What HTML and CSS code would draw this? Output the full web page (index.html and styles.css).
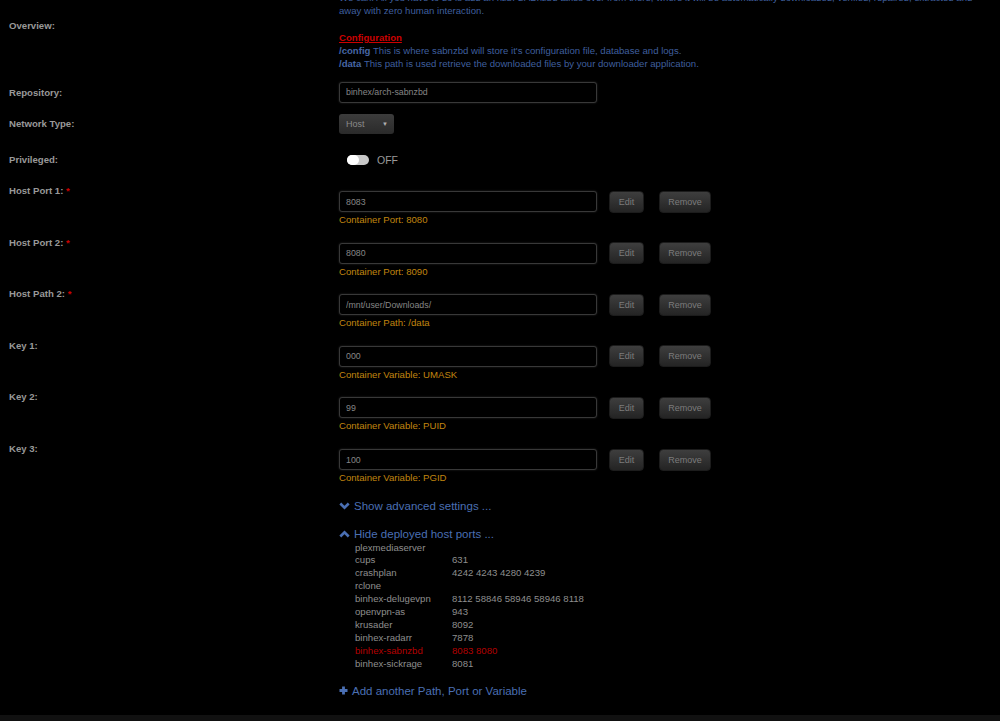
FILE: index.html
```html
<!DOCTYPE html>
<html lang="en">
<head>
    <meta charset="UTF-8" />
    <title>Add Container</title>
    <link rel="stylesheet" href="styles.css">
</head>
<body>
    <div class="page">
        <div class="row row-overview">
            <div class="label">Overview:</div>
            <div class="desc">
                <span class="desc-first">We can. All you have to do is add an nzb. SABnzbd takes over from there, where it will be automatically downloaded, verified, repaired, extracted and</span>
                <span class="desc-line">away with zero human interaction.</span>
                <span class="desc-title">Configuration</span>
                <span class="desc-line"><b>/config</b> This is where sabnzbd will store it's configuration file, database and logs.</span>
                <span class="desc-line"><b>/data</b> This path is used retrieve the downloaded files by your downloader application.</span>
            </div>
        </div>

        <div class="row row-center row-repo">
            <div class="label">Repository:</div>
            <div class="field"><input class="text-input" type="text" value="binhex/arch-sabnzbd" /></div>
        </div>

        <div class="row row-center row-net">
            <div class="label">Network Type:</div>
            <div class="field">
                <div class="select"><span>Host</span><span class="caret">&#9660;</span></div>
            </div>
        </div>

        <div class="row row-center row-priv">
            <div class="label">Privileged:</div>
            <div class="field toggle-field">
                <span class="toggle"><span class="knob"></span></span>
                <span class="toggle-text">OFF</span>
            </div>
        </div>

        <div class="row row-item">
            <div class="label">Host Port 1: <span class="req">*</span></div>
            <div class="field">
                <div class="controls">
                    <input class="text-input" type="text" value="8083" />
                    <button class="btn btn-edit">Edit</button>
                    <button class="btn btn-remove">Remove</button>
                </div>
                <div class="hint">Container Port: 8080</div>
            </div>
        </div>

        <div class="row row-item">
            <div class="label">Host Port 2: <span class="req">*</span></div>
            <div class="field">
                <div class="controls">
                    <input class="text-input" type="text" value="8080" />
                    <button class="btn btn-edit">Edit</button>
                    <button class="btn btn-remove">Remove</button>
                </div>
                <div class="hint">Container Port: 8090</div>
            </div>
        </div>

        <div class="row row-item">
            <div class="label">Host Path 2: <span class="req">*</span></div>
            <div class="field">
                <div class="controls">
                    <input class="text-input" type="text" value="/mnt/user/Downloads/" />
                    <button class="btn btn-edit">Edit</button>
                    <button class="btn btn-remove">Remove</button>
                </div>
                <div class="hint">Container Path: /data</div>
            </div>
        </div>

        <div class="row row-item">
            <div class="label">Key 1:</div>
            <div class="field">
                <div class="controls">
                    <input class="text-input" type="text" value="000" />
                    <button class="btn btn-edit">Edit</button>
                    <button class="btn btn-remove">Remove</button>
                </div>
                <div class="hint">Container Variable: UMASK</div>
            </div>
        </div>

        <div class="row row-item">
            <div class="label">Key 2:</div>
            <div class="field">
                <div class="controls">
                    <input class="text-input" type="text" value="99" />
                    <button class="btn btn-edit">Edit</button>
                    <button class="btn btn-remove">Remove</button>
                </div>
                <div class="hint">Container Variable: PUID</div>
            </div>
        </div>

        <div class="row row-item">
            <div class="label">Key 3:</div>
            <div class="field">
                <div class="controls">
                    <input class="text-input" type="text" value="100" />
                    <button class="btn btn-edit">Edit</button>
                    <button class="btn btn-remove">Remove</button>
                </div>
                <div class="hint">Container Variable: PGID</div>
            </div>
        </div>

        <div class="extras">
            <a class="toggle-link link-advanced">
                <svg width="11" height="8" viewBox="0 0 11 8"><path d="M1.3 1.5 L5.5 5.7 L9.7 1.5" fill="none" stroke="#4a6fb3" stroke-width="2.6"/></svg>
                Show advanced settings ...
            </a>
            <a class="toggle-link link-ports">
                <svg width="11" height="8" viewBox="0 0 11 8"><path d="M1.3 6.5 L5.5 2.3 L9.7 6.5" fill="none" stroke="#4a6fb3" stroke-width="2.6"/></svg>
                Hide deployed host ports ...
            </a>
            <div class="ports">
                <span>plexmediaserver</span><span></span>
                <span>cups</span><span>631</span>
                <span>crashplan</span><span>4242 4243 4280 4239</span>
                <span>rclone</span><span></span>
                <span>binhex-delugevpn</span><span>8112 58846 58946 58946 8118</span>
                <span>openvpn-as</span><span>943</span>
                <span>krusader</span><span>8092</span>
                <span>binhex-radarr</span><span>7878</span>
                <span class="mine">binhex-sabnzbd</span><span class="mine">8083 8080</span>
                <span>binhex-sickrage</span><span>8081</span>
            </div>
            <a class="toggle-link link-add">
                <svg width="9" height="9" viewBox="0 0 9 9"><path d="M4.5 0.5 V8.5 M0.5 4.5 H8.5" fill="none" stroke="#4a6fb3" stroke-width="2.8"/></svg>
                Add another Path, Port or Variable
            </a>
        </div>
    </div>
    <div class="footer"></div>
</body>
</html>
```

FILE: styles.css
```css
html, body {
    margin: 0;
    height: 100%;
    overflow: hidden;
}
body {
    background: #000;
    font-family: "Liberation Sans", Arial, sans-serif;
    font-size: 9.6px;
    color: #999;
}
.page {
    margin-top: -9px;
}
.row {
    display: flex;
    align-items: flex-start;
}
.label {
    width: 330px;
    padding-left: 9px;
    flex: none;
    font-weight: bold;
    color: #999;
    line-height: 13.3px;
}
.req {
    color: #c00;
}
.field {
    flex: 1;
}

/* overview */
.row-overview .label {
    margin-top: 27.6px;
}
.desc {
    padding-right: 2px;
    line-height: 13.3px;
    color: #3f5f9e;
}
.desc span {
    display: block;
}
.desc-first {
    text-align: justify;
    text-align-last: justify;
}
.desc-title {
    margin-top: 13px;
    color: #c00;
    font-weight: bold;
    text-decoration: underline;
}
.desc b {
    color: #4767a6;
}

/* simple rows */
.row-center {
    align-items: center;
}
.row-repo {
    margin-top: 11.2px;
}
.row-net {
    margin-top: 11px;
}
.row-priv {
    margin-top: 17px;
    height: 18px;
}
.text-input {
    display: block;
    box-sizing: border-box;
    width: 258px;
    height: 21px;
    margin: 0;
    padding: 0 6px;
    background: #000;
    border: 1px solid #383838;
    border-radius: 3px;
    box-shadow: 0 0 2px #2c2c2c;
    font-family: "Liberation Sans", Arial, sans-serif;
    font-size: 8.8px;
    color: #868686;
    outline: none;
}
.select {
    display: flex;
    justify-content: space-between;
    align-items: center;
    box-sizing: border-box;
    width: 55px;
    height: 20px;
    padding: 0 6px 0 7px;
    border-radius: 3px;
    background: linear-gradient(#3c3c3c, #2a2a2a);
    font-size: 9px;
    color: #8a8a8a;
}
.caret {
    font-size: 6px;
    color: #b0b0b0;
}
.toggle-field {
    display: flex;
    align-items: center;
    gap: 8px;
    padding-left: 8px;
}
.toggle {
    display: block;
    width: 22px;
    height: 10px;
    border-radius: 5px;
    background: #c8c8c8;
}
.knob {
    display: block;
    width: 12px;
    height: 10px;
    border-radius: 5px;
    background: #fff;
}
.toggle-text {
    font-size: 10.5px;
    color: #9a9a9a;
}

/* port / path / variable rows */
.row-item {
    margin-top: 9.35px;
}
.row-priv + .row-item {
    margin-top: 15.35px;
}
.row-item .field {
    padding-top: 6.65px;
}
.controls {
    display: flex;
    align-items: center;
    height: 22px;
}
.btn {
    height: 22px;
    margin: 0;
    padding: 0;
    border: 1px solid #1c1c1c;
    border-radius: 4px;
    background: linear-gradient(#3e3e3e, #242424);
    box-shadow: 0 1px 1px rgba(0,0,0,0.6);
    font-family: "Liberation Sans", Arial, sans-serif;
    font-size: 9px;
    color: #7c7c7c;
}
.btn-edit {
    width: 35px;
    margin-left: 12px;
}
.btn-remove {
    width: 52px;
    margin-left: 15px;
}
.hint {
    margin-top: 0.3px;
    line-height: 13.3px;
    color: #c0850f;
}

/* bottom links and host list */
.extras {
    margin-top: 13.4px;
    padding-left: 339px;
}
.toggle-link {
    display: flex;
    align-items: center;
    gap: 4px;
    height: 16px;
    font-size: 11.5px;
    color: #4a6fb3;
}
.link-ports {
    margin-top: 12px;
}
.ports {
    display: grid;
    grid-template-columns: 97px auto;
    padding-left: 16px;
    line-height: 12.9px;
    color: #8e8e8e;
}
.ports .mine {
    color: #b30000;
}
.link-add {
    margin-top: 12px;
    gap: 4px;
}
.footer {
    position: fixed;
    left: 0;
    right: 0;
    bottom: 0;
    height: 6px;
    background: #111;
}
```
